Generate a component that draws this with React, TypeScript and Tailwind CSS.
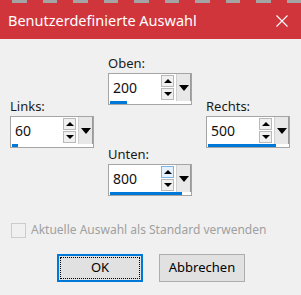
import React from "react";

type SpinProps = {
  label: string;
  value: string;
  bar: number;
  hoverUp?: boolean;
};

function Spin({ label, value, bar, hoverUp }: SpinProps) {
  return (
    <div className="flex flex-col">
      <div className="h-[16px] text-[13px] leading-[16px] text-[#1a1a1a]">{label}</div>
      <div className="mt-[2px] flex h-[32px] w-[84px] flex-col border border-[#a5a5a5] bg-white">
        <div className="flex min-h-0 flex-1 items-stretch">
          <div className="flex flex-1 items-center pl-[4px] text-[14px] text-[#111]">{value}</div>
          <div className="flex flex-col justify-center gap-[1px]">
            <div
              className={
                "flex h-[12px] w-[13px] items-center justify-center border " +
                (hoverUp ? "border-[#7eb4ea] bg-[#e5f1fb]" : "border-[#b9b9b9] bg-[#f0f0f0]")
              }
            >
              <span className="h-0 w-0 border-x-[4px] border-b-[4px] border-x-transparent border-b-black" />
            </div>
            <div className="flex h-[12px] w-[13px] items-center justify-center border border-[#b9b9b9] bg-[#f0f0f0]">
              <span className="h-0 w-0 border-x-[4px] border-t-[4px] border-x-transparent border-t-black" />
            </div>
          </div>
          <div className="ml-[2px] flex w-[15px] items-center justify-center border-l border-r border-l-[#d0d0d0] border-r-[#9a9a9a] bg-[#e8e8e8]">
            <span className="h-0 w-0 border-x-[5px] border-t-[6px] border-x-transparent border-t-black" />
          </div>
        </div>
        <div className="h-[3px] shrink-0 pl-[1px]">
          <div className="h-full bg-[#0078d7]" style={{ width: bar }} />
        </div>
      </div>
    </div>
  );
}

export default function App() {
  return (
    <div
      className="h-[295px] w-[301px] overflow-hidden bg-[#f0f0f0]"
      style={{ fontFamily: '"Noto Sans", "Open Sans", sans-serif' }}
    >
      <div className="relative flex h-[39px] items-center justify-between bg-[#d1353c] pl-[8px] pr-[13px] text-white">
        <div className="absolute left-0 top-0 flex h-[3px] w-full">
          {Array.from({ length: 10 }).map((_, i) => (
            <div key={i} className="ml-[16px] h-full w-[16px] bg-[#a4a4a4] first:ml-[12px]" />
          ))}
        </div>
        <span className="mt-[3px] text-[14.5px]">Benutzerdefinierte Auswahl</span>
        <svg width="12" height="12" viewBox="0 0 12 12" className="mt-[3px]">
          <path d="M0.5 0.5 L11.5 11.5 M11.5 0.5 L0.5 11.5" stroke="white" strokeWidth="1.1" />
        </svg>
      </div>

      <div className="grid grid-cols-[84px_84px_84px] gap-x-[14px] pl-[10px] pt-[16px]">
        <div className="mt-[43px]">
          <Spin label="Links:" value="60" bar={6} />
        </div>
        <div className="flex flex-col gap-[41px]">
          <Spin label="Oben:" value="200" bar={17} />
          <Spin label="Unten:" value="800" bar={72} hoverUp />
        </div>
        <div className="mt-[43px]">
          <Spin label="Rechts:" value="500" bar={68} />
        </div>
      </div>

      <div className="mt-[25px] flex items-center gap-[5px] pl-[11px]">
        <div className="h-[15px] w-[15px] border border-[#cccccc] bg-[#f0f0f0]" />
        <span className="text-[12px] text-[#a0a0a0]">Aktuelle Auswahl als Standard verwenden</span>
      </div>

      <div className="mt-[15px] flex justify-center gap-[16px] pl-[1px]">
        <div className="flex h-[28px] w-[86px] items-center justify-center border-2 border-[#0078d7] bg-[#e1e1e1] p-[1px]">
          <div className="flex h-full w-full items-center justify-center border border-dotted border-black text-[13px] text-black">
            OK
          </div>
        </div>
        <div className="flex h-[28px] w-[86px] items-center justify-center border border-[#adadad] bg-[#e1e1e1] text-[13px] text-black">
          Abbrechen
        </div>
      </div>
    </div>
  );
}
